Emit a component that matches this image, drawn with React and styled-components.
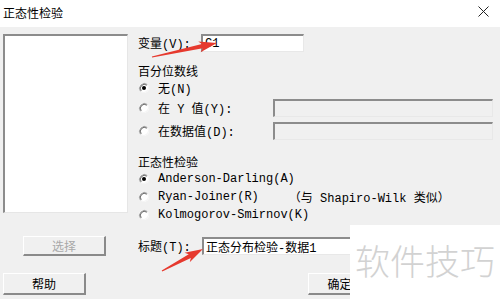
import React from 'react'
import styled, { createGlobalStyle } from 'styled-components'

const GlobalStyle = createGlobalStyle`
  html, body {
    margin: 0;
    padding: 0;
    background: #f0f0f0;
  }
`

const UI_FONT = `"Liberation Mono", "Noto Sans CJK SC", monospace`

const Window = styled.div`
  position: relative;
  width: 500px;
  height: 299px;
  overflow: hidden;
  background: #f0f0f0;
  font-family: ${UI_FONT};
  font-size: 12px;
  color: #000;
`

/* Title bar */

const TitleBar = styled.div`
  height: 27px;
  padding: 0 11px 0 3px;
  box-sizing: border-box;
  display: flex;
  align-items: center;
  justify-content: space-between;
  background: #fff;
`

const Title = styled.span`
  font-family: "Noto Sans CJK SC", sans-serif;
  font-size: 12px;
  line-height: 1;
  margin-top: -1px;
`

const Close = styled.svg`
  width: 11px;
  height: 11px;
  margin-top: -5px;
`

/* Body */

const Body = styled.div`
  display: grid;
  grid-template-columns: 125px 1fr;
  column-gap: 10px;
  padding-left: 3px;
`

const LeftColumn = styled.div`
  display: flex;
  flex-direction: column;
  align-items: flex-start;
  height: 229px;
`

const RightColumn = styled.div`
  display: flex;
  flex-direction: column;
  align-items: flex-start;
`

const ListBox = styled.div`
  margin-top: 7px;
  width: 125px;
  height: 179px;
  box-sizing: border-box;
  background: #fff;
  border-style: solid;
  border-width: 2px 1px 1px 2px;
  border-color: #8c8c8c #e6e6e6 #e6e6e6 #8c8c8c;
`

const Button = styled.div`
  display: flex;
  align-items: center;
  justify-content: center;
  box-sizing: border-box;
  width: ${p => p.$width || 83}px;
  height: ${p => p.$height || 22}px;
  margin-top: ${p => p.$top || 0}px;
  margin-left: ${p => p.$left || 0}px;
  background: #f0f0f0;
  border-style: solid;
  border-width: 1px 2px 2px 1px;
  border-color: #fff #8a8a8a #8a8a8a #fff;
  font-family: "Noto Sans CJK SC", sans-serif;
  font-size: 12px;
  color: ${p => (p.$disabled ? '#a8a8a8' : '#000')};
`

const FieldRow = styled.div`
  display: flex;
  align-items: center;
  height: 18px;
  margin-top: ${p => p.$top || 0}px;
`

const FieldLabel = styled.span`
  width: ${p => p.$width}px;
  white-space: nowrap;
`

const Input = styled.div`
  box-sizing: border-box;
  width: ${p => p.$width}px;
  height: 18px;
  padding: 0 2px;
  display: flex;
  align-items: center;
  background: ${p => (p.$disabled ? '#f0f0f0' : '#fff')};
  border-style: solid;
  border-width: 2px 1px 1px 2px;
  border-color: #8c8c8c #e8e8e8 #e8e8e8 #8c8c8c;
  white-space: nowrap;
  overflow: hidden;
`

const SectionLabel = styled.div`
  height: 14px;
  line-height: 14px;
  margin-top: ${p => p.$top || 0}px;
  font-family: "Noto Sans CJK SC", sans-serif;
`

const RadioRow = styled.div`
  display: flex;
  align-items: center;
  height: ${p => p.$height || 20}px;
  margin-top: ${p => p.$top || 0}px;
  white-space: nowrap;
`

const RadioLabel = styled.span`
  width: ${p => (p.$width ? `${p.$width}px` : 'auto')};
  margin-left: 8px;
`

const Note = styled.span`
  margin-left: ${p => p.$left}px;
`

const Footer = styled.div`
  display: flex;
  margin-top: 17px;
`

/* Watermark and annotations */

const Watermark = styled.div`
  position: absolute;
  left: 350px;
  top: 225px;
  right: 0;
  bottom: 0;
  background: #fff;
  display: flex;
  align-items: center;
  padding-left: 5px;
  padding-bottom: 6px;
  font-family: "Noto Sans CJK SC", sans-serif;
  font-weight: 300;
  font-size: 35px;
  color: #d2d2d2;
`

const Overlay = styled.svg`
  position: absolute;
  left: 0;
  top: 0;
  width: 500px;
  height: 299px;
  pointer-events: none;
`

const Radio = ({ checked }) => (
  <svg width="12" height="12" viewBox="0 0 12 12">
    <circle cx="6" cy="6" r="5" fill="#fff" />
    <path d="M9.5 2.5 A5 5 0 0 0 2.5 9.5" stroke="#a0a0a0" strokeWidth="1" fill="none" />
    <path d="M8.8 3.2 A4 4 0 0 0 3.2 8.8" stroke="#696969" strokeWidth="1" fill="none" />
    <path d="M2.5 9.5 A5 5 0 0 0 9.5 2.5" stroke="#f4f4f4" strokeWidth="1" fill="none" />
    {checked && <circle cx="6" cy="6" r="2" fill="#000" />}
  </svg>
)

const Arrow = ({ x1, y1, x2, y2 }) => {
  const dx = x2 - x1
  const dy = y2 - y1
  const L = Math.sqrt(dx * dx + dy * dy)
  const angle = (Math.atan2(dy, dx) * 180) / Math.PI
  const pts = [
    [0, 0.6],
    [L - 15, 2.2],
    [L - 18, 5.5],
    [L, 0],
    [L - 18, -5.5],
    [L - 15, -2.2],
    [0, -0.6],
  ]
    .map(p => p.join(','))
    .join(' ')
  return (
    <polygon
      points={pts}
      fill="#e6392e"
      transform={`translate(${x1} ${y1}) rotate(${angle})`}
    />
  )
}

export default function App() {
  return (
    <>
      <GlobalStyle />
      <Window>
        <TitleBar>
          <Title>正态性检验</Title>
          <Close viewBox="0 0 11 11">
            <path d="M0.5 0.5 L10.5 10.5 M10.5 0.5 L0.5 10.5" stroke="#222" strokeWidth="1" />
          </Close>
        </TitleBar>
        <Body>
          <LeftColumn>
            <ListBox />
            <Button $top={23} $left={20} $height={20} $disabled>
              选择
            </Button>
          </LeftColumn>
          <RightColumn>
            <FieldRow $top={7}>
              <FieldLabel $width={63}>变量(V):</FieldLabel>
              <Input $width={103}>C1</Input>
            </FieldRow>
            <SectionLabel $top={12}>百分位数线</SectionLabel>
            <RadioRow>
              <Radio checked />
              <RadioLabel>无(N)</RadioLabel>
            </RadioRow>
            <RadioRow>
              <Radio />
              <RadioLabel $width={115}>在 Y 值(Y):</RadioLabel>
              <Input $width={220} $disabled />
            </RadioRow>
            <RadioRow $top={3}>
              <Radio />
              <RadioLabel $width={115}>在数据值(D):</RadioLabel>
              <Input $width={220} $disabled />
            </RadioRow>
            <SectionLabel $top={14}>正态性检验</SectionLabel>
            <RadioRow $height={19}>
              <Radio checked />
              <RadioLabel>Anderson-Darling(A)</RadioLabel>
            </RadioRow>
            <RadioRow $height={18}>
              <Radio />
              <RadioLabel>Ryan-Joiner(R)</RadioLabel>
              <Note $left={30}>（与 Shapiro-Wilk 类似）</Note>
            </RadioRow>
            <RadioRow $height={18}>
              <Radio />
              <RadioLabel>Kolmogorov-Smirnov(K)</RadioLabel>
            </RadioRow>
            <FieldRow $top={13}>
              <FieldLabel $width={64}>标题(T):</FieldLabel>
              <Input $width={180}>正态分布检验-数据1</Input>
            </FieldRow>
          </RightColumn>
          <Footer>
            <Button>帮助</Button>
          </Footer>
          <Footer>
            <Button $left={170} $width={64}>
              确定
            </Button>
          </Footer>
        </Body>
        <Watermark>软件技巧</Watermark>
        <Overlay viewBox="0 0 500 299">
          <Arrow x1={152} y1={57} x2={217} y2={43} />
          <Arrow x1={162} y1={271} x2={203} y2={249} />
        </Overlay>
      </Window>
    </>
  )
}
